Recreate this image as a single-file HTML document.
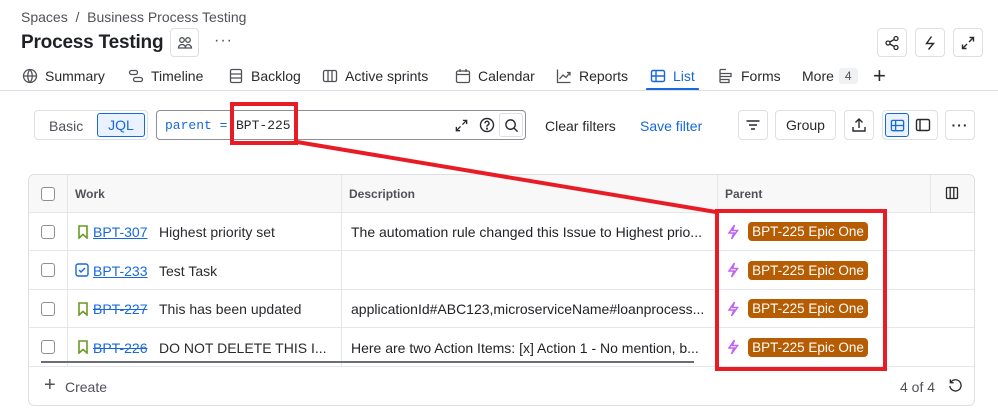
<!DOCTYPE html>
<html><head><meta charset="utf-8"><style>
*{box-sizing:border-box;margin:0;padding:0}
body{width:998px;height:415px;background:#fff;font-family:"Liberation Sans",sans-serif;color:#292a2e;position:relative;overflow:hidden;font-size:14px}
.a{position:absolute;white-space:nowrap}
.btn{position:absolute;border:1px solid #dcdfe4;border-radius:4px;background:#fff;display:flex;align-items:center;justify-content:center}
.tab{position:absolute;top:68px;font-size:14px;color:#292a2e;display:flex;align-items:center;gap:7px}
.row{position:absolute;left:28px;width:946px;border-top:1px solid #e4e6ea}
.cb{position:absolute;left:41px;width:14px;height:14px;border:1.5px solid #8c8f97;border-radius:3px;background:#fff}
.key{color:#1868db;text-decoration:underline}
.badge{position:absolute;left:748px;width:120px;height:19px;background:#b65c02;color:#fff;border-radius:4px;font-size:13.5px;line-height:19px;text-align:center}
svg{display:block}
</style></head><body>
<div class="a" style="left:21px;top:9px;color:#505258;font-size:14px">Spaces &nbsp;/&nbsp; Business Process Testing</div>
<div class="a" style="left:21px;top:32px;font-size:19px;font-weight:bold;color:#1f2125;letter-spacing:-0.2px">Process Testing</div>
<div class="btn" style="left:170px;top:28px;width:29px;height:29px"><svg width="16" height="16" viewBox="0 0 16 16" fill="none" stroke="#505258" stroke-width="1.3"><circle cx="5" cy="5" r="2.3"/><circle cx="11" cy="5" r="2.3"/><path d="M1.5 13c0-2 1.5-3.5 3.5-3.5S8.5 11 8.5 13zM8.5 13c0-2 1-3.5 2.5-3.5s3.5 1.5 3.5 3.5z"/></svg></div>
<div class="a" style="left:214px;top:32px;font-size:16px;color:#505258;letter-spacing:1px">···</div>
<div class="btn" style="left:877px;top:28px;width:30px;height:29px"><svg width="16" height="16" viewBox="0 0 16 16" fill="none" stroke="#292a2e" stroke-width="1.3"><circle cx="4" cy="8" r="2"/><circle cx="12" cy="3.5" r="2"/><circle cx="12" cy="12.5" r="2"/><path d="M5.8 7l4.4-2.5M5.8 9l4.4 2.5"/></svg></div>
<div class="btn" style="left:915px;top:28px;width:30px;height:29px"><svg width="16" height="16" viewBox="0 0 16 16" fill="none" stroke="#292a2e" stroke-width="1.4"><path d="M9.5 1.5L4.5 8.5h7L6.5 14.5"/></svg></div>
<div class="btn" style="left:953px;top:28px;width:30px;height:29px"><svg width="16" height="16" viewBox="0 0 16 16" fill="none" stroke="#292a2e" stroke-width="1.4"><path d="M9.5 2.5h4v4M13.5 2.5l-4.5 4.5M6.5 13.5h-4v-4M2.5 13.5L7 9"/></svg></div>

<div class="tab" style="left:22px"><svg width="16" height="16" viewBox="0 0 16 16" fill="none" stroke="#505258" stroke-width="1.3"><circle cx="8" cy="8" r="6.5"/><path d="M1.5 8h13M8 1.5c-3 3.5-3 9.5 0 13M8 1.5c3 3.5 3 9.5 0 13"/></svg>Summary</div>
<div class="tab" style="left:128px"><svg width="16" height="16" viewBox="0 0 16 16" fill="none" stroke="#505258" stroke-width="1.3"><rect x="1.5" y="2.5" width="8" height="4" rx="2"/><rect x="5.5" y="9.5" width="9" height="4" rx="2"/></svg>Timeline</div>
<div class="tab" style="left:228px"><svg width="16" height="16" viewBox="0 0 16 16" fill="none" stroke="#505258" stroke-width="1.3"><rect x="2.5" y="1.5" width="11" height="13" rx="1.5"/><path d="M2.5 6h11M2.5 10h11"/></svg>Backlog</div>
<div class="tab" style="left:322px"><svg width="16" height="16" viewBox="0 0 16 16" fill="none" stroke="#505258" stroke-width="1.3"><rect x="1.5" y="2.5" width="13" height="11" rx="1.5"/><path d="M6 2.5v11M10 2.5v11"/></svg>Active sprints</div>
<div class="tab" style="left:455px"><svg width="16" height="16" viewBox="0 0 16 16" fill="none" stroke="#505258" stroke-width="1.3"><rect x="1.5" y="3" width="13" height="11.5" rx="1.5"/><path d="M1.5 6.5h13M5 1v3M11 1v3"/></svg>Calendar</div>
<div class="tab" style="left:556px"><svg width="16" height="16" viewBox="0 0 16 16" fill="none" stroke="#505258" stroke-width="1.3"><path d="M1.5 1.5v13h13M3.5 11l3.5-4 3 2.5 4-5M11 4.5h3v3"/></svg>Reports</div>
<div class="tab" style="left:650px;color:#1868db"><svg width="16" height="16" viewBox="0 0 16 16" fill="none" stroke="#1868db" stroke-width="1.4"><rect x="1.5" y="2.5" width="13" height="11" rx="1.5"/><path d="M1.5 8h13M6 2.5v11"/></svg>List</div>
<div class="a" style="left:646px;top:88px;width:53px;height:3px;background:#1868db;border-radius:1px"></div>
<div class="tab" style="left:718px"><svg width="16" height="16" viewBox="0 0 16 16" fill="none" stroke="#505258" stroke-width="1.3"><path d="M2 1.5h6M2 1.5v13M2 5.5h11v3H2M2 11.5h9v3H2"/></svg>Forms</div>
<div class="tab" style="left:802px">More<span style="background:#f0f1f2;color:#505258;font-size:12px;padding:1px 6px;border-radius:3px;margin-left:-2px">4</span></div>
<div class="a" style="left:873px;top:63px;font-size:22px;color:#292a2e;font-weight:300">+</div>
<div class="a" style="left:0;top:90px;width:998px;height:1px;background:#dcdfe4"></div>

<div class="a" style="left:34px;top:110px;width:114px;height:30px;border:1px solid #dcdfe4;border-radius:4px"></div>
<div class="a" style="left:49px;top:118px;color:#505258">Basic</div>
<div class="a" style="left:97px;top:113px;width:48px;height:24px;background:#e9f2fe;border:1px solid #1868db;border-radius:3px;color:#1868db;text-align:center;line-height:22px">JQL</div>
<div class="a" style="left:156px;top:110px;width:370px;height:30px;border:1px solid #8c8f97;border-radius:4px"></div>
<div class="a" style="left:165px;top:118px;font-family:'Liberation Mono',monospace;font-size:13px;color:#1868db">parent =</div>
<div class="a" style="left:236px;top:118px;font-family:'Liberation Mono',monospace;font-size:13px;color:#292a2e">BPT-225</div>
<div class="a" style="left:454px;top:118px"><svg width="15" height="15" viewBox="0 0 16 16" fill="none" stroke="#292a2e" stroke-width="1.4"><path d="M9.5 2.5h4v4M13.5 2.5l-4.5 4.5M6.5 13.5h-4v-4M2.5 13.5L7 9"/></svg></div>
<div class="a" style="left:479px;top:117px"><svg width="16" height="16" viewBox="0 0 16 16" fill="none" stroke="#292a2e" stroke-width="1.4"><circle cx="8" cy="8" r="6.5"/><path d="M6 6.3a2 2 0 1 1 2.5 1.9c-.4.2-.5.5-.5 1v.6"/><circle cx="8" cy="11.6" r=".4" fill="#292a2e"/></svg></div>
<div class="a" style="left:499px;top:113px;width:24px;height:24px;border:1px solid #dcdfe4;border-radius:3px;display:flex;align-items:center;justify-content:center"><svg width="15" height="15" viewBox="0 0 16 16" fill="none" stroke="#292a2e" stroke-width="1.5"><circle cx="7" cy="7" r="5"/><path d="M10.5 10.5l4 4"/></svg></div>
<div class="a" style="left:545px;top:118px;color:#292a2e">Clear filters</div>
<div class="a" style="left:640px;top:118px;color:#1868db">Save filter</div>
<div class="btn" style="left:738px;top:110px;width:30px;height:30px"><svg width="16" height="16" viewBox="0 0 16 16" stroke="#292a2e" stroke-width="1.4"><path d="M1.5 4h13M4 8h8M6 12h4"/></svg></div>
<div class="btn" style="left:775px;top:110px;width:61px;height:30px">Group</div>
<div class="btn" style="left:844px;top:110px;width:30px;height:30px"><svg width="16" height="16" viewBox="0 0 16 16" fill="none" stroke="#292a2e" stroke-width="1.4"><path d="M8 11V2M4.5 5.5L8 2l3.5 3.5M2 10v4h12v-4"/></svg></div>
<div class="btn" style="left:882px;top:110px;width:56px;height:30px;justify-content:flex-start;padding-left:2px"><div style="width:24px;height:24px;background:#e9f2fe;border:1px solid #1868db;border-radius:3px;display:flex;align-items:center;justify-content:center"><svg width="15" height="15" viewBox="0 0 16 16" fill="none" stroke="#1868db" stroke-width="1.4"><rect x="1.5" y="2.5" width="13" height="11" rx="1.5"/><path d="M1.5 8h13M6 2.5v11"/></svg></div><svg style="margin-left:6px" width="16" height="16" viewBox="0 0 16 16" fill="none" stroke="#292a2e" stroke-width="1.4"><rect x="1.5" y="2.5" width="13" height="11" rx="1.5"/><path d="M5 2.5v11"/></svg></div>
<div class="btn" style="left:945px;top:110px;width:30px;height:30px;font-weight:bold;letter-spacing:1px">···</div>

<div class="a" style="left:28px;top:174px;width:947px;height:232px;border:1px solid #dcdfe4;border-radius:6px;overflow:hidden">
<div style="position:absolute;left:0;top:0;width:100%;height:38px;background:#f8f8f8"></div></div>
<div class="a" style="left:67px;top:175px;width:1px;height:191px;background:#e4e6ea"></div>
<div class="a" style="left:341px;top:175px;width:1px;height:191px;background:#e4e6ea"></div>
<div class="a" style="left:717px;top:175px;width:1px;height:191px;background:#e4e6ea"></div>
<div class="a" style="left:930px;top:175px;width:1px;height:37px;background:#e4e6ea"></div>
<div class="cb" style="top:187px"></div>
<div class="a" style="left:75px;top:187px;font-size:12px;font-weight:bold;color:#505258">Work</div>
<div class="a" style="left:349px;top:187px;font-size:12px;font-weight:bold;color:#505258">Description</div>
<div class="a" style="left:725px;top:187px;font-size:12px;font-weight:bold;color:#505258">Parent</div>
<div class="a" style="left:945px;top:186px"><svg width="14" height="14" viewBox="0 0 14 14" fill="none" stroke="#292a2e" stroke-width="1.3"><rect x="1.5" y="1.5" width="11" height="11" rx="1"/><path d="M5.2 1.5v11M8.8 1.5v11"/></svg></div>

<div class="row" style="top:212px"></div><div class="row" style="top:250px"></div><div class="row" style="top:289px"></div><div class="row" style="top:327px"></div><div class="row" style="top:366px"></div>

<div class="cb" style="top:225px"></div><div class="cb" style="top:263px"></div><div class="cb" style="top:302px"></div><div class="cb" style="top:340px"></div>
<svg class="a" style="left:77px;top:225px" width="12" height="14" viewBox="0 0 12 14" fill="none" stroke="#6a9a23" stroke-width="1.6"><path d="M2 1h8v12L6 9.5 2 13z"/></svg>
<svg class="a" style="left:75px;top:263px" width="14" height="14" viewBox="0 0 14 14" fill="none" stroke="#1868db" stroke-width="1.4"><rect x="1" y="1" width="12" height="12" rx="2"/><path d="M4 7l2 2 4-4"/></svg>
<svg class="a" style="left:77px;top:302px" width="12" height="14" viewBox="0 0 12 14" fill="none" stroke="#6a9a23" stroke-width="1.6"><path d="M2 1h8v12L6 9.5 2 13z"/></svg>
<svg class="a" style="left:77px;top:340px" width="12" height="14" viewBox="0 0 12 14" fill="none" stroke="#6a9a23" stroke-width="1.6"><path d="M2 1h8v12L6 9.5 2 13z"/></svg>
<div class="a key" style="left:93px;top:224px">BPT-307</div><div class="a" style="left:159px;top:224px">Highest priority set</div>
<div class="a key" style="left:93px;top:263px">BPT-233</div><div class="a" style="left:159px;top:263px">Test Task</div>
<div class="a key" style="left:93px;top:301px;text-decoration:line-through">BPT-227</div><div class="a" style="left:159px;top:301px">This has been updated</div>
<div class="a key" style="left:93px;top:340px;text-decoration:line-through">BPT-226</div><div class="a" style="left:159px;top:340px">DO NOT DELETE THIS I...</div>
<div class="a" style="left:351px;top:224px;color:#1f2125">The automation rule changed this Issue to Highest prio...</div>
<div class="a" style="left:351px;top:301px;color:#1f2125">applicationId#ABC123,microserviceName#loanprocess...</div>
<div class="a" style="left:351px;top:340px;color:#1f2125">Here are two Action Items: [x] Action 1 - No mention, b...</div>
<div class="a" style="left:41px;top:361px;width:653px;height:2px;background:#6b6e76"></div>

<svg class="a" style="left:726px;top:224px" width="14" height="16" viewBox="0 0 14 16" fill="none" stroke="#bf63f3" stroke-width="1.5"><path d="M8.5 1L3 9h5L5.5 15 11.5 6.5h-5z"/></svg>
<svg class="a" style="left:726px;top:262px" width="14" height="16" viewBox="0 0 14 16" fill="none" stroke="#bf63f3" stroke-width="1.5"><path d="M8.5 1L3 9h5L5.5 15 11.5 6.5h-5z"/></svg>
<svg class="a" style="left:726px;top:301px" width="14" height="16" viewBox="0 0 14 16" fill="none" stroke="#bf63f3" stroke-width="1.5"><path d="M8.5 1L3 9h5L5.5 15 11.5 6.5h-5z"/></svg>
<svg class="a" style="left:726px;top:339px" width="14" height="16" viewBox="0 0 14 16" fill="none" stroke="#bf63f3" stroke-width="1.5"><path d="M8.5 1L3 9h5L5.5 15 11.5 6.5h-5z"/></svg>
<div class="badge" style="top:222px">BPT-225 Epic One</div>
<div class="badge" style="top:261px">BPT-225 Epic One</div>
<div class="badge" style="top:299px">BPT-225 Epic One</div>
<div class="badge" style="top:338px">BPT-225 Epic One</div>

<div class="a" style="left:44px;top:375px;font-size:20px;line-height:20px;color:#505258">+</div>
<div class="a" style="left:65px;top:379px;color:#505258">Create</div>
<div class="a" style="left:900px;top:379px;color:#505258">4 of 4</div>
<svg class="a" style="left:948px;top:378px" width="15" height="15" viewBox="0 0 16 16" fill="none" stroke="#292a2e" stroke-width="1.4"><path d="M3 4.5A6 6 0 1 1 2 8.5M2.5 1.5v3.5H6"/></svg>

<svg class="a" style="left:0;top:0" width="998" height="415"><line x1="297" y1="142" x2="716" y2="212" stroke="#e81c24" stroke-width="4"/></svg>
<div class="a" style="left:230px;top:102px;width:68px;height:43px;border:4px solid #e81c24"></div>
<div class="a" style="left:715px;top:209px;width:172px;height:162px;border:4px solid #e81c24"></div>
</body></html>
